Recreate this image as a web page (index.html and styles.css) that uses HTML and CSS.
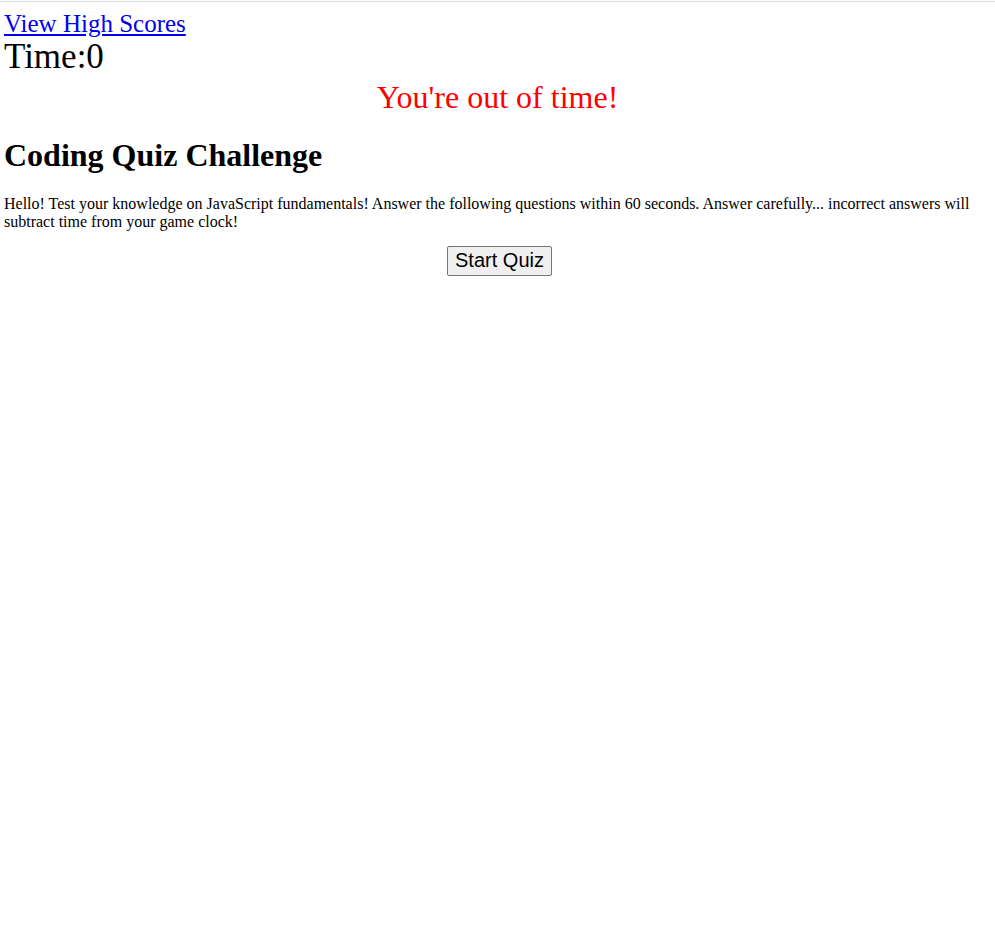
FILE: index.html
```html
<!DOCTYPE html>
<html>
<head>
<meta charset="utf-8">
<link rel="stylesheet" href="styles.css">
</head>
<body>
<div class="topline"></div>
<header class="header">
  <a class="scores-link" href="#">View High Scores</a>
  <div class="timer">Time:<span>0</span></div>
</header>
<div class="message">You're out of time!</div>
<main class="intro">
  <h1 class="title">Coding Quiz Challenge</h1>
  <p class="desc">Hello! Test your knowledge on JavaScript fundamentals! Answer the following questions within 60 seconds. Answer carefully... incorrect answers will subtract time from your game clock!</p>
  <div class="start-wrap"><button class="start-btn">Start Quiz</button></div>
</main>
</body>
</html>
```
FILE: styles.css
```css
html, body {
  margin: 0;
  padding: 0;
  background: #fff;
}
body {
  font-family: "Liberation Serif", "Times New Roman", serif;
  color: #000;
  padding: 0 4px;
}
.topline {
  height: 1px;
  background: #dcdcdc;
  margin: 1px -4px 0;
}
.header {
  padding-top: 7px;
}
.scores-link {
  font-size: 25px;
  color: #0000ee;
  text-decoration: underline;
  line-height: 29px;
  display: inline-block;
}
.timer {
  font-size: 35px;
  line-height: 38px;
}
.message {
  color: #ff0000;
  font-size: 32px;
  line-height: 38px;
  text-align: center;
  margin-top: 2px;
}
.title {
  font-size: 32px;
  font-weight: bold;
  margin: 21px 0 0;
  line-height: 36px;
}
.desc {
  font-size: 16px;
  line-height: 18px;
  margin: 22px 0 0;
}
.start-wrap {
  text-align: center;
  margin-top: 15px;
  padding-left: 4px;
}
.start-btn {
  font-family: "Liberation Sans", Arial, sans-serif;
  font-size: 20px;
  padding: 2px 7px 3px;
  background: #efefef;
  border: 1px solid #767676;
  border-radius: 2px;
  color: #000;
}
```
